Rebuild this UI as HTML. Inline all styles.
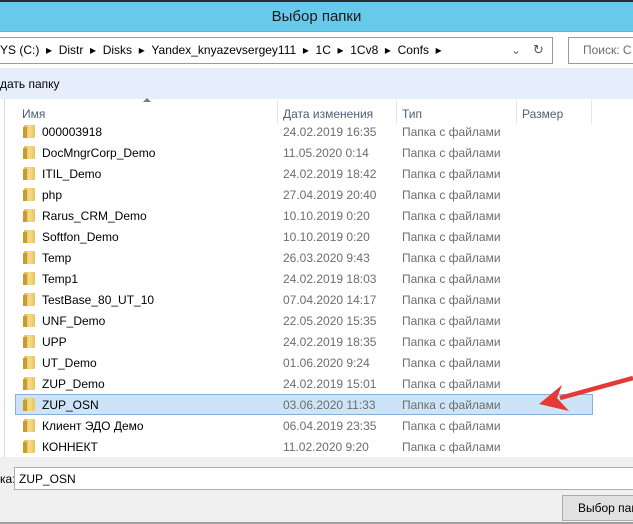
<!DOCTYPE html>
<html><head><meta charset="utf-8"><style>
*{margin:0;padding:0;box-sizing:border-box}
body{width:633px;height:524px;overflow:hidden;background:#fff;font-family:"Liberation Sans","DejaVu Sans",sans-serif;font-size:12px;color:#000;position:relative}
.a{position:absolute;white-space:nowrap}
.row{position:absolute;left:15px;width:578px;height:21px}
.row span{position:absolute;top:4px}
.g{color:#6d6d6d}
.f{position:absolute;left:9px;top:4px;width:11px;height:13px;background:linear-gradient(90deg,#e0b84a,#f6dc8a 50%,#e8c45a);border-radius:1px}
.f:after{content:"";position:absolute;left:-1px;top:2px;width:4px;height:11px;background:#c99a2e}
</style></head><body>
<div class="a" style="left:0;top:0;width:633px;height:2px;background:#2b2b2b"></div>
<div class="a" style="left:0;top:2px;width:633px;height:30px;background:#69c9ea;border-bottom:1px solid #5bb5d5"></div>
<div class="a" style="left:0;top:8px;width:633px;text-align:center;font-size:15px;color:#1a1a1a">Выбор папки</div>
<div class="a" style="left:-2px;top:37px;width:555px;height:27px;border:1px solid #9a9a9a"></div>
<div class="a" style="left:0;top:43px;font-size:12px">YS (C:) &nbsp;▸ &nbsp;Distr &nbsp;▸ &nbsp;Disks &nbsp;▸ &nbsp;Yandex_knyazevsergey111 &nbsp;▸ &nbsp;1C &nbsp;▸ &nbsp;1Cv8 &nbsp;▸ &nbsp;Confs &nbsp;▸</div>
<div class="a" style="left:511px;top:43px;color:#666">⌄</div>
<div class="a" style="left:533px;top:42px;color:#555;font-size:13px">↻</div>
<div class="a" style="left:568px;top:37px;width:70px;height:27px;border:1px solid #9a9a9a"></div>
<div class="a" style="left:583px;top:43px;color:#6d6d6d">Поиск: С</div>
<div class="a" style="left:0;top:68px;width:633px;height:31px;background:#e6eefb"></div>
<div class="a" style="left:0;top:77px">дать папку</div>
<div class="a" style="left:4px;top:99px;width:1px;height:358px;background:#d8d8d8"></div>
<div class="a" style="left:5px;top:99px;width:628px;height:358px;background:#fff"></div>
<div class="a" style="left:143px;top:98px;width:0;height:0;border-left:4px solid transparent;border-right:4px solid transparent;border-bottom:4px solid #6d7d8d"></div>
<div class="a g" style="left:22px;top:107px;color:#4c607a">Имя</div>
<div class="a" style="left:277px;top:100px;width:1px;height:24px;background:#e5e5e5"></div>
<div class="a" style="left:283px;top:107px;color:#4c607a">Дата изменения</div>
<div class="a" style="left:396px;top:100px;width:1px;height:24px;background:#e5e5e5"></div>
<div class="a" style="left:402px;top:107px;color:#4c607a">Тип</div>
<div class="a" style="left:516px;top:100px;width:1px;height:24px;background:#e5e5e5"></div>
<div class="a" style="left:522px;top:107px;color:#4c607a">Размер</div>
<div class="a" style="left:591px;top:100px;width:1px;height:24px;background:#e5e5e5"></div>

<div class="row" style="top:121px"><i class="f"></i><span style="left:27px">000003918</span><span class="g" style="left:268px">24.02.2019 16:35</span><span class="g" style="left:387px">Папка с файлами</span></div>
<div class="row" style="top:142px"><i class="f"></i><span style="left:27px">DocMngrCorp_Demo</span><span class="g" style="left:268px">11.05.2020 0:14</span><span class="g" style="left:387px">Папка с файлами</span></div>
<div class="row" style="top:163px"><i class="f"></i><span style="left:27px">ITIL_Demo</span><span class="g" style="left:268px">24.02.2019 18:42</span><span class="g" style="left:387px">Папка с файлами</span></div>
<div class="row" style="top:184px"><i class="f"></i><span style="left:27px">php</span><span class="g" style="left:268px">27.04.2019 20:40</span><span class="g" style="left:387px">Папка с файлами</span></div>
<div class="row" style="top:205px"><i class="f"></i><span style="left:27px">Rarus_CRM_Demo</span><span class="g" style="left:268px">10.10.2019 0:20</span><span class="g" style="left:387px">Папка с файлами</span></div>
<div class="row" style="top:226px"><i class="f"></i><span style="left:27px">Softfon_Demo</span><span class="g" style="left:268px">10.10.2019 0:20</span><span class="g" style="left:387px">Папка с файлами</span></div>
<div class="row" style="top:247px"><i class="f"></i><span style="left:27px">Temp</span><span class="g" style="left:268px">26.03.2020 9:43</span><span class="g" style="left:387px">Папка с файлами</span></div>
<div class="row" style="top:268px"><i class="f"></i><span style="left:27px">Temp1</span><span class="g" style="left:268px">24.02.2019 18:03</span><span class="g" style="left:387px">Папка с файлами</span></div>
<div class="row" style="top:289px"><i class="f"></i><span style="left:27px">TestBase_80_UT_10</span><span class="g" style="left:268px">07.04.2020 14:17</span><span class="g" style="left:387px">Папка с файлами</span></div>
<div class="row" style="top:310px"><i class="f"></i><span style="left:27px">UNF_Demo</span><span class="g" style="left:268px">22.05.2020 15:35</span><span class="g" style="left:387px">Папка с файлами</span></div>
<div class="row" style="top:331px"><i class="f"></i><span style="left:27px">UPP</span><span class="g" style="left:268px">24.02.2019 18:35</span><span class="g" style="left:387px">Папка с файлами</span></div>
<div class="row" style="top:352px"><i class="f"></i><span style="left:27px">UT_Demo</span><span class="g" style="left:268px">01.06.2020 9:24</span><span class="g" style="left:387px">Папка с файлами</span></div>
<div class="row" style="top:373px"><i class="f"></i><span style="left:27px">ZUP_Demo</span><span class="g" style="left:268px">24.02.2019 15:01</span><span class="g" style="left:387px">Папка с файлами</span></div>
<div class="row" style="top:394px;background:#cce4f7;border:1px solid #8aaedb"><i class="f" style="left:8px;top:3px"></i><span style="left:26px;top:3px">ZUP_OSN</span><span class="g" style="left:267px;top:3px">03.06.2020 11:33</span><span class="g" style="left:386px;top:3px">Папка с файлами</span></div>
<div class="row" style="top:415px"><i class="f"></i><span style="left:27px">Клиент ЭДО Демо</span><span class="g" style="left:268px">06.04.2019 23:35</span><span class="g" style="left:387px">Папка с файлами</span></div>
<div class="row" style="top:436px"><i class="f"></i><span style="left:27px">КОННЕКТ</span><span class="g" style="left:268px">11.02.2020 9:20</span><span class="g" style="left:387px">Папка с файлами</span></div>

<div class="a" style="left:0;top:457px;width:633px;height:67px;background:#f0f0f0"></div>
<div class="a" style="left:0;top:472px">ка:</div>
<div class="a" style="left:14px;top:467px;width:625px;height:23px;background:#fff;border:1px solid #adadad"></div>
<div class="a" style="left:19px;top:472px">ZUP_OSN</div>
<div class="a" style="left:562px;top:495px;width:80px;height:26px;background:#e1e1e1;border:1px solid #adadad"></div>
<div class="a" style="left:578px;top:501px">Выбор папки</div>
<div class="a" style="left:0;top:522px;width:633px;height:2px;background:#a0a0a0"></div>

<svg class="a" style="left:0;top:0" width="633" height="524">
<line x1="633" y1="378" x2="560" y2="398" stroke="#e53935" stroke-width="4.5"/>
<polygon points="539,404 562,385 557,398 569,411" fill="#e53935"/>
</svg>
</body></html>
